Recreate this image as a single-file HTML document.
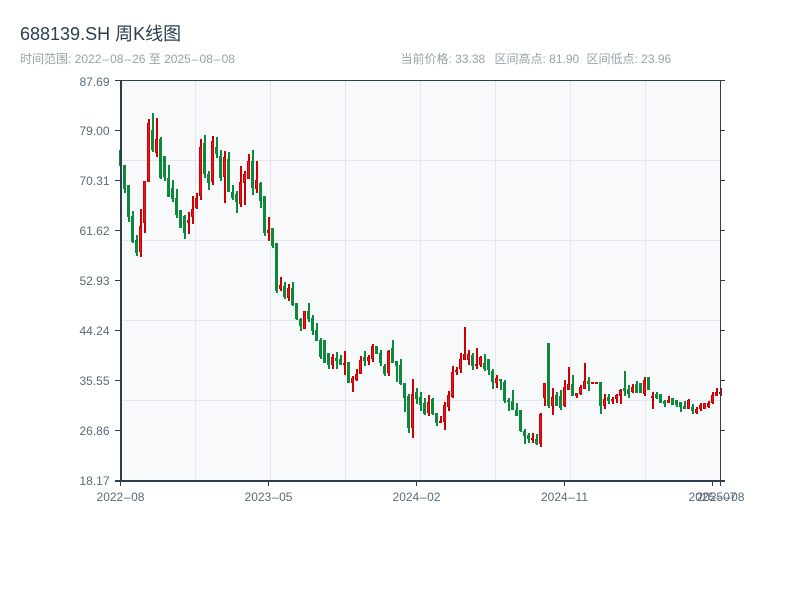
<!DOCTYPE html>
<html>
<head>
<meta charset="utf-8">
<style>
html,body{margin:0;padding:0;background:#fff;width:800px;height:600px;overflow:hidden}
svg{position:absolute;left:0;top:0}
text{font-family:"Liberation Sans","Noto Sans CJK SC",sans-serif}
</style>
</head>
<body>
<svg id="s" width="800" height="600" viewBox="0 0 800 600" xmlns="http://www.w3.org/2000/svg">
<text x="20" y="40" font-size="18" fill="#2c3e50">688139.SH 周K线图</text>
<text x="20" y="63" font-size="12" fill="#95a5a6">时间范围: 2022<tspan dx="1">–</tspan><tspan dx="1">08</tspan><tspan dx="1">–</tspan><tspan dx="1">26 至 2025</tspan><tspan dx="1">–</tspan><tspan dx="1">08</tspan><tspan dx="1">–</tspan><tspan dx="1">08</tspan></text>
<text x="400.5" y="63" font-size="12" fill="#95a5a6">当前价格: 33.38</text>
<text x="494.5" y="63" font-size="12" fill="#95a5a6">区间高点: 81.90</text>
<text x="586.5" y="63" font-size="12" fill="#95a5a6">区间低点: 23.96</text>
<rect x="120" y="80" width="600" height="400" fill="#f8f9fa"/>
<g stroke="#e3e6eb" stroke-width="1">
<path d="M120 160.5H720M120 240.5H720M120 320.5H720M120 400.5H720"/>
<path d="M195.5 80V480M270.5 80V480M345.5 80V480M420.5 80V480M495.5 80V480M570.5 80V480M645.5 80V480"/>
</g>
<g id="c"></g>
<g fill="#2c3e50">
<rect x="120" y="80" width="2" height="401"/>
<rect x="115" y="80" width="610" height="1"/>
<rect x="115" y="480" width="610" height="2"/>
<rect x="720" y="80" width="1" height="401"/>
<rect x="115" y="130" width="5" height="1"/><rect x="115" y="180" width="5" height="1"/><rect x="115" y="230" width="5" height="1"/><rect x="115" y="280" width="5" height="1"/><rect x="115" y="330" width="5" height="1"/><rect x="115" y="380" width="5" height="1"/><rect x="115" y="430" width="5" height="1"/>
<rect x="720" y="130" width="5" height="1"/><rect x="720" y="180" width="5" height="1"/><rect x="720" y="230" width="5" height="1"/><rect x="720" y="280" width="5" height="1"/><rect x="720" y="330" width="5" height="1"/><rect x="720" y="380" width="5" height="1"/><rect x="720" y="430" width="5" height="1"/>
<rect x="120" y="480" width="1" height="6"/><rect x="268" y="480" width="1" height="6"/><rect x="416" y="480" width="1" height="6"/><rect x="564" y="480" width="1" height="6"/><rect x="712" y="480" width="1" height="6"/><rect x="720" y="480" width="1" height="6"/>
</g>
<g font-size="12" fill="#5a6a7a" text-anchor="end">
<text x="109.5" y="86">87.69</text><text x="109.5" y="135">79.00</text><text x="109.5" y="185">70.31</text><text x="109.5" y="235">61.62</text><text x="109.5" y="285">52.93</text><text x="109.5" y="335">44.24</text><text x="109.5" y="385">35.55</text><text x="109.5" y="435">26.86</text><text x="109.5" y="485">18.17</text>
</g>
<g font-size="12" fill="#5a6a7a" text-anchor="middle">
<text x="120.5" y="501">2022<tspan dx="0.6">–</tspan><tspan dx="0.6">08</tspan></text><text x="268.5" y="501">2023<tspan dx="0.6">–</tspan><tspan dx="0.6">05</tspan></text><text x="416.5" y="501">2024<tspan dx="0.6">–</tspan><tspan dx="0.6">02</tspan></text><text x="564.5" y="501">2024<tspan dx="0.6">–</tspan><tspan dx="0.6">11</tspan></text><text x="712.5" y="501">2025<tspan dx="0.6">–</tspan><tspan dx="0.6">07</tspan></text><text x="720.5" y="501">2025<tspan dx="0.6">–</tspan><tspan dx="0.6">08</tspan></text>
</g>
</svg>
<script>
var d=[[0,150,166,150,166],[0,165,193,165,189],[0,185,222,185,217],[0,211,243,216,242],[0,235,256,240,253],[1,209,257,226,252],[1,181,233,181,223],[1,119,182,123,182],[0,113,152,130,150],[1,118,157,139,153],[0,137,179,139,178],[0,156,181,156,177],[0,165,197,178,197],[0,180,202,188,199],[0,189,218,198,215],[0,210,228,210,228],[0,215,239,216,233],[1,212,234,220,223],[1,196,224,209,217],[1,193,209,198,208],[1,139,200,147,196],[0,135,178,143,174],[0,171,190,174,183],[1,136,185,141,182],[0,137,158,147,154],[0,150,181,156,178],[1,151,203,157,177],[0,152,192,159,192],[0,185,200,192,198],[0,191,213,194,202],[1,166,207,182,204],[1,171,205,174,183],[1,154,179,161,179],[0,150,195,161,188],[1,161,193,180,189],[0,182,208,183,201],[0,196,236,196,233],[1,217,241,230,233],[0,228,248,228,246],[0,243,293,243,291],[1,277,291,285,289],[0,282,299,286,297],[1,284,301,288,298],[0,282,306,288,305],[0,303,320,303,319],[0,318,331,319,326],[1,311,329,311,329],[0,303,322,311,319],[0,315,335,318,331],[0,323,341,330,341],[0,338,359,340,357],[0,340,363,340,363],[0,353,369,353,365],[1,354,369,357,365],[0,352,369,358,361],[0,355,365,359,365],[1,351,375,363,365],[0,362,383,362,383],[1,376,392,378,383],[1,369,381,374,380],[1,356,374,360,374],[0,351,366,357,361],[1,355,365,357,361],[1,344,362,346,359],[0,346,354,346,354],[0,350,366,353,363],[0,364,376,366,374],[1,350,376,351,373],[0,340,363,348,363],[0,361,382,361,366],[0,359,385,365,384],[0,383,412,383,398],[0,394,433,396,428],[1,379,438,394,428],[0,388,404,392,399],[0,392,411,397,405],[0,398,415,403,414],[1,395,416,402,413],[0,398,415,399,414],[0,413,426,413,423],[1,416,423,421,423],[1,402,430,405,422],[1,391,411,395,407],[1,366,398,372,397],[1,367,375,370,372],[1,353,373,359,369],[1,327,360,354,360],[1,350,365,354,360],[0,353,370,355,366],[1,348,369,364,366],[1,356,367,357,365],[0,354,371,363,369],[0,359,375,359,370],[0,369,389,371,382],[1,375,388,378,383],[0,379,390,379,381],[0,380,403,382,401],[0,398,411,400,402],[0,390,410,401,410],[0,403,416,410,416],[0,410,432,410,431],[0,429,444,431,436],[0,433,443,435,439],[1,433,443,438,439],[0,434,445,439,444],[1,413,447,414,444],[1,383,406,383,398],[0,343,408,343,406],[1,388,415,397,406],[0,392,406,395,406],[0,390,410,396,408],[1,380,407,387,406],[1,367,390,384,390],[0,375,396,384,396],[1,393,398,393,396],[1,385,395,387,394],[1,363,389,381,389],[0,377,391,381,384],[1,382,384,382,384],[1,382,384,382,384],[0,382,414,382,406],[1,394,409,399,406],[0,394,404,397,401],[1,397,404,399,401],[1,394,403,395,399],[1,389,404,390,396],[0,371,396,388,391],[0,385,398,389,394],[1,384,393,387,392],[0,381,393,384,393],[0,383,393,383,393],[1,377,396,380,394],[0,377,390,377,390],[1,392,409,396,398],[0,392,399,394,398],[0,394,403,394,403],[0,400,407,401,404],[1,396,403,400,403],[0,398,405,398,405],[0,400,407,400,405],[0,402,412,402,407],[0,401,409,406,409],[1,399,409,400,409],[0,404,414,407,411],[1,407,414,409,413],[1,403,411,405,409],[1,403,409,403,409],[1,401,408,403,407],[1,392,404,395,403],[1,388,396,392,396],[1,388,396,392,394]];
var h='';
for(var i=0;i<d.length;i++){
  var c=d[i],x=119+4*i,col=c[0]?'#cc0000':'#0a8a3a';
  h+='<rect x="'+(x+1)+'" y="'+c[1]+'" width="2" height="'+(c[2]-c[1])+'" fill="'+col+'"/>';
  if(c[0]){
    h+='<rect x="'+(x+0.5)+'" y="'+(c[3]+0.5)+'" width="2" height="'+Math.max(c[4]-c[3]-1,1)+'" fill="#f01420" stroke="#cc0000" stroke-width="1"/>';
  }else{
    h+='<rect x="'+x+'" y="'+c[3]+'" width="3" height="'+(c[4]-c[3])+'" fill="'+col+'"/>';
  }
}
document.getElementById('c').innerHTML=h;
</script>
</body>
</html>
